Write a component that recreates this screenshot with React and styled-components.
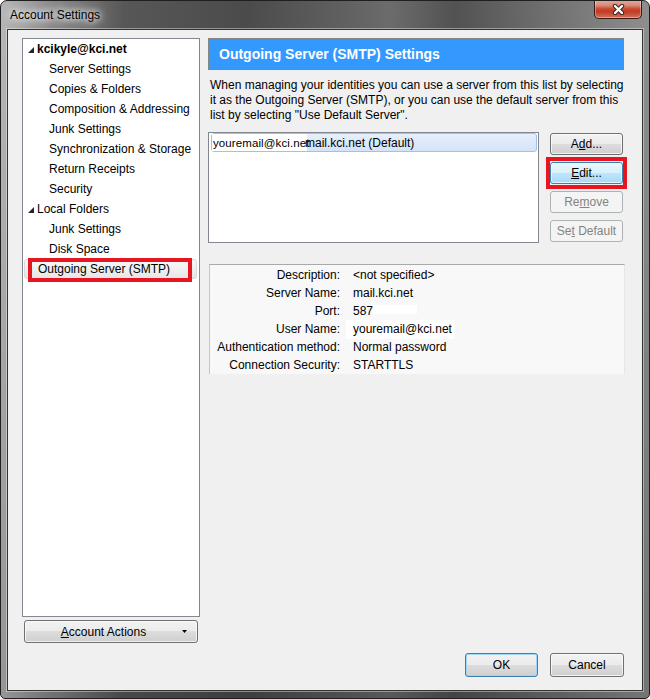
import React from "react";
import styled, { createGlobalStyle } from "styled-components";

const GlobalStyle = createGlobalStyle`
  html, body { margin: 0; padding: 0; background: #ffffff; }
  body { font-family: "Liberation Sans", Arial, sans-serif; font-size: 12px; color: #000; }
  * { box-sizing: border-box; }
`;

const Window = styled.div`
  width: 650px;
  height: 699px;
  display: flex;
  flex-direction: column;
  border: 1px solid #1f1f1f;
  border-radius: 7px 7px 5px 5px;
  padding: 0 6px 7px 6px;
  overflow: hidden;
  background:
    linear-gradient(180deg, rgba(0,0,0,0) 0%, rgba(0,0,0,0.18) 100%),
    linear-gradient(90deg, #b8b8b8 0%, #8e8e8e 7%, #575757 19%, #4b4b4b 38%, #5f5f5f 52%, #6c6c6c 60%, #525252 70%, #6f6f6f 84%, #8f8f8f 100%);
`;

const TitleBar = styled.div`
  height: 28px;
  display: flex;
  justify-content: space-between;
  align-items: flex-start;
  padding-left: 3px;
`;

const Title = styled.div`
  margin-top: 7px;
  font-size: 12px;
  color: #000;
  text-shadow: 0 0 6px #fff, 0 0 10px #fff, 0 0 14px rgba(255,255,255,0.8);
`;

const CloseButton = styled.div`
  width: 48px;
  height: 19px;
  margin-right: 1px;
  margin-top: -1px;
  display: flex;
  align-items: center;
  justify-content: center;
  border: 1px solid #3a1a14;
  border-top: none;
  border-radius: 0 0 5px 5px;
  background: linear-gradient(180deg, #e8aa9c 0%, #d98a78 30%, #c7482f 50%, #c23b22 65%, #d3735d 100%);
  box-shadow: inset 0 0 0 1px rgba(255,255,255,0.35);
`;

const Content = styled.div`
  flex: 1;
  display: flex;
  flex-direction: column;
  background: #f0f0f0;
  border: 1px solid #343434;
  box-shadow: 0 0 0 1px rgba(255,255,255,0.4);
  padding: 8px 17px 13px 14px;
`;

const Main = styled.div`
  display: flex;
  height: 605px;
`;

const Sidebar = styled.div`
  width: 178px;
  display: flex;
  flex-direction: column;
`;

const Tree = styled.div`
  height: 579px;
  background: #fff;
  border: 1px solid #828790;
  display: flex;
  flex-direction: column;
`;

const TreeRow = styled.div`
  position: relative;
  height: 20px;
  display: flex;
  align-items: center;
  padding-left: ${(p) => (p.$level === 1 ? 26 : p.$twisty ? 5 : 14)}px;
  font-weight: ${(p) => (p.$bold ? "bold" : "normal")};
  white-space: nowrap;
  ${(p) =>
    p.$selected &&
    `
    margin: 0 2px 0 1px;
    padding-left: 13px;
    background: linear-gradient(180deg, #f9f9f9 0%, #e6e6e6 100%);
    border: 1px solid #d9d9d9;
    border-radius: 3px;
  `}
`;

const Twisty = styled.svg`
  width: 6px;
  height: 6px;
  margin-right: 3px;
  margin-top: 1px;
`;

const Highlight = styled.div`
  position: absolute;
  border: 4px solid #e8141f;
  pointer-events: none;
  left: ${(p) => p.$l}px;
  top: ${(p) => p.$t}px;
  width: ${(p) => p.$w}px;
  height: ${(p) => p.$h}px;
`;

const Button = styled.div`
  position: relative;
  height: ${(p) => p.$h || 22}px;
  width: ${(p) => (p.$w ? `${p.$w}px` : "auto")};
  display: flex;
  align-items: center;
  justify-content: center;
  border-radius: 3px;
  white-space: nowrap;
  color: ${(p) => (p.$disabled ? "#838383" : "#000")};
  border: 1px solid ${(p) => (p.$disabled ? "#adb2b5" : p.$hover || p.$default ? "#3c7fb1" : "#707070")};
  background: ${(p) =>
    p.$disabled
      ? "#f4f4f4"
      : p.$hover
      ? "linear-gradient(180deg, #eaf6fd 0%, #d9f0fc 50%, #bee6fd 50%, #a7d9f5 100%)"
      : "linear-gradient(180deg, #f2f2f2 0%, #ebebeb 50%, #dddddd 50%, #cfcfcf 100%)"};
  box-shadow: inset 0 0 0 1px ${(p) => (p.$disabled ? "transparent" : p.$default ? "#9fd8f7" : "rgba(255,255,255,0.7)")};
`;

const ButtonLabel = styled.span`
  white-space: pre;
`;

const AccountActions = styled(Button)`
  margin-top: 3px;
  margin-left: 2px;
  width: 174px;
  justify-content: flex-start;
`;

const ActionsLabel = styled.span`
  flex: 1;
  text-align: center;
`;

const DropArrow = styled.svg`
  width: 5px;
  height: 3px;
  margin-right: 10px;
`;

const Mn = styled.span`
  text-decoration: underline;
`;

const Panel = styled.div`
  flex: 1;
  margin-left: 8px;
  display: flex;
  flex-direction: column;
`;

const Header = styled.div`
  height: 32px;
  margin-right: 1px;
  background: #3399ff;
  border: 1px solid #858585;
  color: #fff;
  font-weight: bold;
  font-size: 14px;
  display: flex;
  align-items: center;
  padding-left: 10px;
`;

const Description = styled.div`
  margin-top: 8px;
  padding-left: 2px;
  line-height: 15px;
  white-space: nowrap;
`;

const ListArea = styled.div`
  display: flex;
  margin-top: 9px;
`;

const ListBox = styled.div`
  width: 331px;
  height: 111px;
  background: #fff;
  border: 1px solid #828790;
  padding: 0 1px 0 2px;
`;

const ListRow = styled.div`
  height: 19px;
  display: flex;
  align-items: center;
  background: linear-gradient(180deg, #e6effb 0%, #d4e3f8 100%);
  border: 1px solid #a2c1e8;
  border-radius: 3px;
  white-space: nowrap;
`;

const Patch = styled.span`
  background: #fff;
  height: 17px;
  display: flex;
  align-items: center;
  padding-left: 1px;
  width: 95px;
  font-size: 11.5px;
  letter-spacing: 0.1px;
`;

const RowRest = styled.span`
  margin-left: -2px;
`;

const ButtonColumn = styled.div`
  width: 73px;
  margin-left: 11px;
  margin-top: 1px;
  display: flex;
  flex-direction: column;
  gap: 7px;
`;

const Details = styled.div`
  margin-top: 21px;
  width: 416px;
  margin-left: 1px;
  background: #f8f8f8;
  border-top: 1px solid #a9a9a9;
  border-left: 1px solid #c4c4c4;
  border-right: 1px solid #e6e6e6;
  padding-top: 1px;
  display: grid;
  grid-template-columns: 130px 1fr;
  column-gap: 13px;
  grid-auto-rows: 18px;
  align-items: center;
`;

const Label = styled.div`
  text-align: right;
  white-space: nowrap;
`;

const Value = styled.div`
  position: relative;
  white-space: nowrap;
  display: flex;
  align-items: center;
`;

const WhiteBox = styled.span`
  background: #fff;
  display: inline-flex;
  align-items: center;
  height: 19px;
  margin-left: -7px;
  padding-left: 7px;
  width: 109px;
`;

const Smudge = styled.span`
  position: absolute;
  background: #fff;
  left: ${(p) => p.$l}px;
  top: ${(p) => p.$t}px;
  width: ${(p) => p.$w}px;
  height: ${(p) => p.$h}px;
`;

const Footer = styled.div`
  margin-top: 10px;
  margin-right: 1px;
  display: flex;
  justify-content: flex-end;
  gap: 12px;
`;

const treeItems = [
  { text: "kcikyle@kci.net", level: 0, twisty: true, bold: true },
  { text: "Server Settings", level: 1 },
  { text: "Copies & Folders", level: 1 },
  { text: "Composition & Addressing", level: 1 },
  { text: "Junk Settings", level: 1 },
  { text: "Synchronization & Storage", level: 1 },
  { text: "Return Receipts", level: 1 },
  { text: "Security", level: 1 },
  { text: "Local Folders", level: 0, twisty: true },
  { text: "Junk Settings", level: 1 },
  { text: "Disk Space", level: 1 },
  { text: "Outgoing Server (SMTP)", level: 0, selected: true },
];

const details = [
  ["Description:", "<not specified>"],
  ["Server Name:", "mail.kci.net"],
  ["Port:", "587"],
  ["User Name:", "youremail@kci.net"],
  ["Authentication method:", "Normal password"],
  ["Connection Security:", "STARTTLS"],
];

function CloseX() {
  return (
    <svg width="13" height="11" viewBox="0 0 13 11">
      <path d="M3 2 L10 9 M10 2 L3 9" stroke="#3b2420" strokeWidth="4.4" strokeLinecap="round" fill="none" />
      <path d="M3 2 L10 9 M10 2 L3 9" stroke="#ffffff" strokeWidth="2.4" strokeLinecap="round" fill="none" />
    </svg>
  );
}

export default function App() {
  return (
    <>
      <GlobalStyle />
      <Window>
        <TitleBar>
          <Title>Account Settings</Title>
          <CloseButton>
            <CloseX />
          </CloseButton>
        </TitleBar>
        <Content>
          <Main>
            <Sidebar>
              <Tree>
                {treeItems.map((it, i) => (
                  <TreeRow
                    key={i}
                    $level={it.level}
                    $twisty={it.twisty}
                    $bold={it.bold}
                    $selected={it.selected}
                  >
                    {it.twisty && (
                      <Twisty viewBox="0 0 6 6">
                        <polygon points="6,0 6,6 0,6" fill="#262626" />
                      </Twisty>
                    )}
                    {it.text}
                    {it.selected && <Highlight $l={3} $t={-2} $w={164} $h={24} />}
                  </TreeRow>
                ))}
              </Tree>
              <AccountActions $h={23}>
                <ActionsLabel>
                  <Mn>A</Mn>ccount Actions
                </ActionsLabel>
                <DropArrow viewBox="0 0 5 3">
                  <polygon points="0,0 5,0 2.5,3" fill="#000" />
                </DropArrow>
              </AccountActions>
            </Sidebar>
            <Panel>
              <Header>Outgoing Server (SMTP) Settings</Header>
              <Description>
                When managing your identities you can use a server from this list by selecting
                <br />
                it as the Outgoing Server (SMTP), or you can use the default server from this
                <br />
                list by selecting "Use Default Server".
              </Description>
              <ListArea>
                <ListBox>
                  <ListRow>
                    <Patch>youremail@kci.net</Patch>
                    <RowRest>mail.kci.net (Default)</RowRest>
                  </ListRow>
                </ListBox>
                <ButtonColumn>
                  <Button>
                    <ButtonLabel>
                      A<Mn>d</Mn>d...
                    </ButtonLabel>
                  </Button>
                  <Button $hover>
                    <ButtonLabel>
                      <Mn>E</Mn>dit...
                    </ButtonLabel>
                    <Highlight $l={-5} $t={-6} $w={81} $h={32} />
                  </Button>
                  <Button $disabled>
                    <ButtonLabel>
                      Re<Mn>m</Mn>ove
                    </ButtonLabel>
                  </Button>
                  <Button $disabled>
                    <ButtonLabel>
                      Se<Mn>t</Mn>{" Default"}
                    </ButtonLabel>
                  </Button>
                </ButtonColumn>
              </ListArea>
              <Details>
                {details.map(([l, v], i) => (
                  <React.Fragment key={i}>
                    <Label>{l}</Label>
                    <Value>
                      {i === 3 ? <WhiteBox>{v}</WhiteBox> : v}
                      {i === 2 && <Smudge $l={20} $t={1} $w={44} $h={9} />}
                    </Value>
                  </React.Fragment>
                ))}
              </Details>
            </Panel>
          </Main>
          <Footer>
            <Button $h={24} $w={73} $default>
              <ButtonLabel>OK</ButtonLabel>
            </Button>
            <Button $h={24} $w={74}>
              <ButtonLabel>Cancel</ButtonLabel>
            </Button>
          </Footer>
        </Content>
      </Window>
    </>
  );
}
